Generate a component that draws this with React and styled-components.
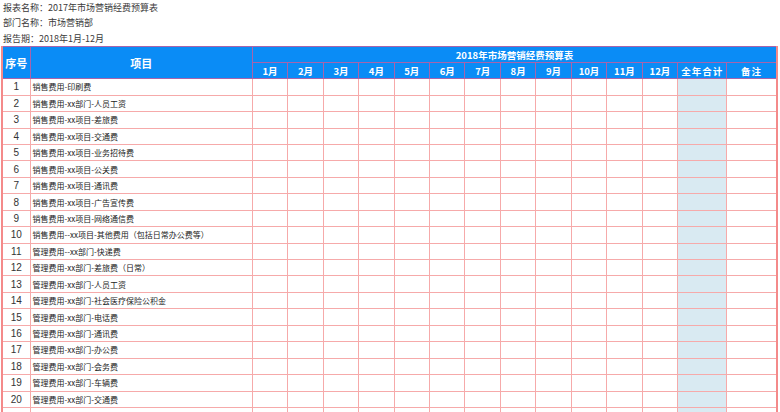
import styled, { createGlobalStyle } from 'styled-components';

const GlobalStyle = createGlobalStyle`
  html, body {
    margin: 0;
    padding: 0;
    background: #ffffff;
  }
  body {
    font-family: 'Noto Sans CJK SC', 'Noto Sans', sans-serif;
    overflow: hidden;
  }
`;

const months = Array.from({ length: 12 }, (_, i) => `${i + 1}月`);

const items = [
  '销售费用-印刷费',
  '销售费用-xx部门-人员工资',
  '销售费用-xx项目-差旅费',
  '销售费用-xx项目-交通费',
  '销售费用-xx项目-业务招待费',
  '销售费用-xx项目-公关费',
  '销售费用-xx项目-通讯费',
  '销售费用-xx项目-广告宣传费',
  '销售费用-xx项目-网络通信费',
  '销售费用--xx项目-其他费用（包括日常办公费等）',
  '管理费用--xx部门-快递费',
  '管理费用-xx部门-差旅费（日常）',
  '管理费用-xx部门-人员工资',
  '管理费用-xx部门-社会医疗保险公积金',
  '管理费用-xx部门-电话费',
  '管理费用-xx部门-通讯费',
  '管理费用-xx部门-办公费',
  '管理费用-xx部门-会务费',
  '管理费用-xx部门-车辆费',
  '管理费用-xx部门-交通费',
  '',
];

const Page = styled.div`
  width: 780px;
  height: 412px;
  overflow: hidden;
`;

const Info = styled.div`
  padding-left: 3px;
  font-size: 9px;
  line-height: 15.4px;
  color: #3a3a3a;
`;

const Table = styled.table`
  margin-left: 1px;
  width: 777px;
  table-layout: fixed;
  border-collapse: collapse;
  border-left: 2px solid #f48a8a;
  border-right: 2px solid #f48a8a;
  border-top: 1px solid #f2b4b4;
`;

const HeadRow = styled.tr`
  height: 16px;
`;

const HeadCell = styled.th`
  padding: 0;
  background: #0a8cf6;
  color: #ffffff;
  font-weight: bold;
  font-size: ${(p) => (p.$big ? '11px' : '9.5px')};
  text-align: center;
  white-space: nowrap;
  border: 1px solid #a864ac;
  letter-spacing: ${(p) => (p.$spaced ? '1px' : '0')};
`;

const Row = styled.tr`
  height: 16.45px;
`;

const Cell = styled.td`
  padding: 0;
  border: 1px solid #f6aaaa;
  background: ${(p) => (p.$total ? '#d9eaf2' : '#ffffff')};
`;

const NumCell = styled(Cell)`
  text-align: center;
  font-family: 'Liberation Sans', 'DejaVu Sans', sans-serif;
  font-size: 10px;
  color: #333333;
`;

const ItemCell = styled(Cell)`
  padding-left: 2px;
  font-size: 8px;
  color: #222222;
  white-space: nowrap;
  overflow: hidden;
`;

export default function App() {
  return (
    <Page>
      <GlobalStyle />
      <Info>报表名称：2017年市场营销经费预算表</Info>
      <Info>部门名称：市场营销部</Info>
      <Info>报告期：2018年1月-12月</Info>
      <Table>
        <colgroup>
          <col style={{ width: 28 }} />
          <col style={{ width: 222 }} />
          {months.map((m) => (
            <col key={m} style={{ width: 35.4 }} />
          ))}
          <col style={{ width: 49 }} />
          <col style={{ width: 50 }} />
        </colgroup>
        <thead>
          <HeadRow>
            <HeadCell $big rowSpan={2}>序号</HeadCell>
            <HeadCell $big rowSpan={2}>项目</HeadCell>
            <HeadCell colSpan={14}>2018年市场营销经费预算表</HeadCell>
          </HeadRow>
          <HeadRow>
            {months.map((m) => (
              <HeadCell key={m}>{m}</HeadCell>
            ))}
            <HeadCell $spaced>全年合计</HeadCell>
            <HeadCell $spaced>备注</HeadCell>
          </HeadRow>
        </thead>
        <tbody>
          {items.map((label, i) => (
            <Row key={i}>
              <NumCell>{label ? i + 1 : ''}</NumCell>
              <ItemCell>{label}</ItemCell>
              {months.map((m) => (
                <Cell key={m} />
              ))}
              <Cell $total />
              <Cell />
            </Row>
          ))}
        </tbody>
      </Table>
    </Page>
  );
}
